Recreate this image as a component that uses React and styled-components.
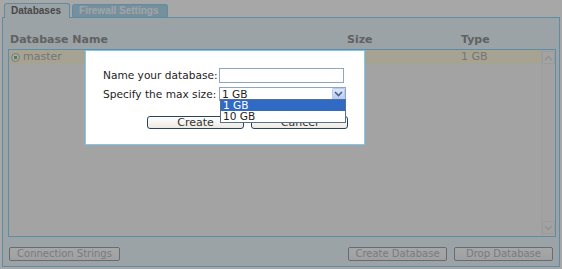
import React from 'react'
import styled, { createGlobalStyle } from 'styled-components'

const GlobalStyle = createGlobalStyle`
  html, body {
    margin: 0;
    padding: 0;
    background: #fff;
  }
  body {
    font-family: "DejaVu Sans", Verdana, sans-serif;
    font-size: 10.6px;
  }
`

const databases = [{ name: 'master', size: '', type: '1 GB', selected: true }]

const Chevron = ({ up, color }) => (
  <svg width="9" height="6" viewBox="0 0 9 6">
    <path
      d={up ? 'M1 5 L4.5 1.5 L8 5' : 'M1 1 L4.5 4.5 L8 1'}
      fill="none"
      stroke={color}
      strokeWidth="1.6"
    />
  </svg>
)

const App = () => {
  return (
    <Page>
      <GlobalStyle />
      <Tabs>
        <Tab active>Databases</Tab>
        <Tab>Firewall Settings</Tab>
      </Tabs>
      <Panel>
        <HeaderRow>
          <HeaderCell>Database Name</HeaderCell>
          <HeaderCell>Size</HeaderCell>
          <HeaderCell>Type</HeaderCell>
        </HeaderRow>
        <ListBox>
          <Rows>
            {databases.map((db) => (
              <Row key={db.name} selected={db.selected}>
                <NameCell>
                  <Radio checked={db.selected} />
                  {db.name}
                </NameCell>
                <Cell>{db.size}</Cell>
                <Cell>{db.type}</Cell>
              </Row>
            ))}
          </Rows>
          <ScrollBar>
            <ScrollArrow>
              <Chevron up color="#d4d4d4" />
            </ScrollArrow>
            <ScrollArrow>
              <Chevron color="#d4d4d4" />
            </ScrollArrow>
          </ScrollBar>
        </ListBox>
        <Footer>
          <PanelButton width="111px">Connection Strings</PanelButton>
          <FooterRight>
            <PanelButton width="99px">Create Database</PanelButton>
            <PanelButton width="99px">Drop Database</PanelButton>
          </FooterRight>
        </Footer>
      </Panel>

      <Overlay />

      <Modal>
        <Form>
          <Label>Name your database:</Label>
          <TextInput />
          <Label>Specify the max size:</Label>
          <Select>
            <SelectValue>1 GB</SelectValue>
            <SelectButton>
              <Chevron color="#4d6185" />
            </SelectButton>
            <DropList>
              <Option selected>1 GB</Option>
              <Option>10 GB</Option>
            </DropList>
          </Select>
        </Form>
        <ModalButtons>
          <ModalButton>Create</ModalButton>
          <ModalButton>Cancel</ModalButton>
        </ModalButtons>
      </Modal>
    </Page>
  )
}

export default App

const Page = styled.div`
position: relative;
width: 562px;
height: 269px;
overflow: hidden;
background: #fff;
`

const Tabs = styled.div`
display: flex;
align-items: flex-end;
gap: 2px;
height: 17px;
padding-left: 4px;
box-sizing: border-box;
`

const Tab = styled.div`
position: relative;
z-index: 1;
box-sizing: border-box;
height: ${(p) => (p.active ? '15px' : '13px')};
margin-bottom: ${(p) => (p.active ? '-1px' : '0')};
padding: 0 8px 0 6px;
border: 1px solid #6cc8f5;
border-bottom: none;
border-radius: 3px 3px 0 0;
background: ${(p) => (p.active ? '#e6f6ff' : '#9ccfea')};
color: ${(p) => (p.active ? '#3e3e3e' : '#f2faff')};
font-family: "Liberation Sans", Arial, sans-serif;
font-weight: bold;
font-size: 10px;
line-height: ${(p) => (p.active ? '14px' : '12px')};
white-space: nowrap;
`

const Panel = styled.div`
display: flex;
flex-direction: column;
box-sizing: border-box;
height: 250px;
margin: 0 2px;
padding: 15px 3px 0 5px;
border: 1px solid #6cc8f5;
background: #e6f6ff;
`

const HeaderRow = styled.div`
display: grid;
grid-template-columns: 337px 114px 1fr;
height: 16px;
padding-left: 2px;
`

const HeaderCell = styled.div`
color: #727272;
font-weight: bold;
font-size: 11px;
line-height: 14px;
`

const ListBox = styled.div`
display: flex;
height: 188px;
box-sizing: border-box;
border: 1px solid #6cc8f5;
background: #f6f6f6;
`

const Rows = styled.div`
flex: 1;
`

const Row = styled.div`
display: grid;
grid-template-columns: 337px 114px 1fr;
height: 14px;
padding-left: 1px;
background: ${(p) => (p.selected ? '#fff6d4' : 'transparent')};
color: #9a9a9a;
font-size: 11px;
line-height: 14px;
`

const NameCell = styled.div`
display: flex;
align-items: center;
gap: 3px;
`

const Cell = styled.div`
`

const Radio = styled.span`
display: inline-block;
box-sizing: border-box;
width: 9px;
height: 9px;
margin-left: 1px;
border: 1px solid #a0a0a0;
border-radius: 50%;
background: ${(p) =>
  p.checked ? 'radial-gradient(circle, #3cbc3c 0 1.6px, #fff 2px)' : '#fff'};
`

const ScrollBar = styled.div`
display: flex;
flex-direction: column;
justify-content: space-between;
width: 13px;
padding: 1px 0 2px;
border-left: 1px solid #ececec;
background: #f4f4f4;
`

const ScrollArrow = styled.div`
display: flex;
align-items: center;
justify-content: center;
height: 13px;
box-sizing: border-box;
border: 1px solid #e6e6e6;
background: #f6f6f6;
`

const Footer = styled.div`
display: flex;
justify-content: space-between;
margin-top: 10px;
padding: 0 3px 0 1px;
`

const FooterRight = styled.div`
display: flex;
gap: 7px;
`

const PanelButton = styled.button`
box-sizing: border-box;
width: ${(p) => p.width};
height: 14px;
padding: 0;
border: 1px solid #7c8894;
border-radius: 2px;
background: linear-gradient(#ffffff, #eef1f4);
color: #a0a8b0;
font-family: "DejaVu Sans", Verdana, sans-serif;
font-size: 10px;
line-height: 12px;
white-space: nowrap;
overflow: hidden;
`

const Overlay = styled.div`
position: absolute;
inset: 0;
z-index: 5;
background: rgba(80, 80, 80, 0.5);
`

const Modal = styled.div`
position: absolute;
z-index: 10;
left: 85px;
top: 50px;
width: 280px;
height: 95px;
box-sizing: border-box;
padding: 17px 0 0 17px;
border: 1px solid #7ccaf0;
background: #fff;
color: #1e1e1e;
`

const Form = styled.div`
display: grid;
grid-template-columns: 116px 127px;
row-gap: 4px;
align-items: center;
`

const Label = styled.div`
font-size: 10.6px;
line-height: 13px;
white-space: nowrap;
`

const TextInput = styled.div`
box-sizing: border-box;
width: 125px;
height: 15px;
border: 1px solid #8fa7bd;
background: #fff;
`

const Select = styled.div`
position: relative;
display: flex;
align-items: center;
box-sizing: border-box;
width: 127px;
height: 14px;
border: 1px solid #8fa7bd;
background: #fff;
`

const SelectValue = styled.div`
flex: 1;
padding-left: 2px;
font-size: 10.6px;
line-height: 12px;
`

const SelectButton = styled.div`
display: flex;
align-items: center;
justify-content: center;
box-sizing: border-box;
width: 13px;
height: 12px;
border: 1px solid #b9cbf1;
border-radius: 1px;
background: linear-gradient(#dbe6fd, #b6cbf7);
`

const DropList = styled.div`
position: absolute;
left: 0px;
top: 11px;
width: 126px;
box-sizing: border-box;
border: 1px solid #5b6e8c;
background: #fff;
`

const Option = styled.div`
height: 11px;
padding-left: 2px;
font-size: 10.6px;
line-height: 11px;
background: ${(p) => (p.selected ? '#316ac5' : '#fff')};
color: ${(p) => (p.selected ? '#fff' : '#1e1e1e')};
`

const ModalButtons = styled.div`
display: flex;
justify-content: flex-end;
gap: 7px;
width: 245px;
margin-top: 15px;
`

const ModalButton = styled.button`
box-sizing: border-box;
width: 97px;
height: 13px;
padding: 0;
border: 1px solid #2a4260;
border-radius: 3px;
background: linear-gradient(#ffffff, #ebe9e1);
color: #333;
font-family: "DejaVu Sans", Verdana, sans-serif;
font-size: 11px;
line-height: 11px;
overflow: hidden;
`
